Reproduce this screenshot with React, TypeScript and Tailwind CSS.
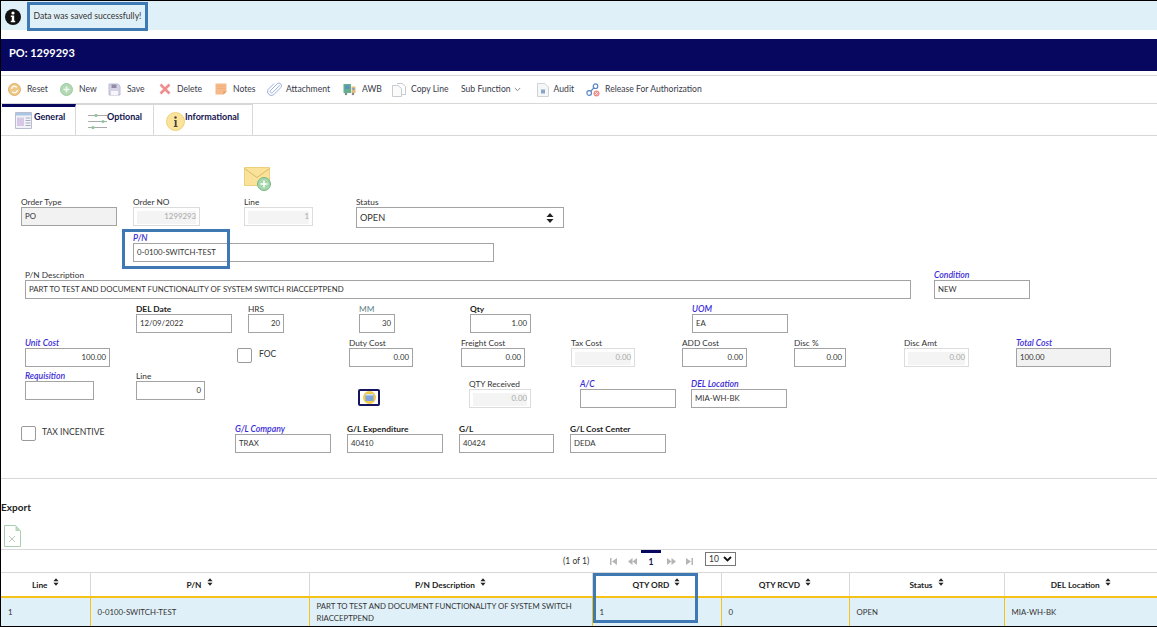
import type { ReactNode } from "react";

type FieldProps = {
    label: string;
    value?: string;
    className: string;
    tone?: "plain" | "link" | "bold" | "muted";
    state?: "normal" | "disabled" | "readonly";
    right?: boolean;
    children?: ReactNode;
};

const labelTones = {
    plain: "text-[8.3px] text-[#333]",
    link: "text-[8.7px] italic font-semibold text-[#3a2bd8]",
    bold: "text-[8.4px] font-bold text-[#222]",
    muted: "text-[8.3px] text-[#5f7f86]",
};

function Field({ label, value, className, tone = "plain", state = "normal", right, children }: FieldProps) {
    return (
        <div className={`relative shrink-0 ${className}`}>
            <div className={`h-[10px] whitespace-nowrap leading-[10px] ${labelTones[tone]}`}>{label}</div>
            <div
                className={[
                    "flex h-[19px] items-center border-[1.5px] px-[3px] pt-[1px] text-[7.8px] whitespace-nowrap",
                    right ? "justify-end" : "",
                    state === "disabled"
                        ? "border-[#dcdcdc] text-[#a8a8a8]"
                        : state === "readonly"
                          ? "border-[#a3a3a3] bg-[#f2f2f2] text-[#333]"
                          : "border-[#a3a3a3] bg-white text-[#333]",
                ].join(" ")}
            >
                {state === "disabled" ? (
                    <span className="flex h-[13px] w-full items-center justify-end bg-[#f4f4f4]">{value}</span>
                ) : (
                    value
                )}
            </div>
            {children}
        </div>
    );
}

function Check({ className }: { className: string }) {
    return <div className={`h-[15px] w-[15px] shrink-0 rounded-[2px] border border-[#9a9a9a] bg-white ${className}`} />;
}

function ResetIcon() {
    return (
        <svg width="13" height="13" viewBox="0 0 13 13">
            <circle cx="6.5" cy="6.5" r="6" fill="#efc98a" stroke="#e0b060" />
            <path d="M3.5 6a3 3 0 0 1 5.3-1.6M9.5 7a3 3 0 0 1-5.3 1.6" fill="none" stroke="#fff" strokeWidth="1.2" />
        </svg>
    );
}

function NewIcon() {
    return (
        <svg width="13" height="13" viewBox="0 0 13 13">
            <circle cx="6.5" cy="6.5" r="6" fill="#b3d8b4" stroke="#9ccb9e" />
            <path d="M6.5 3.5v6M3.5 6.5h6" stroke="#f0f8f0" strokeWidth="1.6" />
        </svg>
    );
}

function SaveIcon() {
    return (
        <svg width="13" height="13" viewBox="0 0 13 13">
            <path d="M1 1h9l2 2v9H1z" fill="#d5d2e6" stroke="#bdbad4" />
            <path d="M3.5 1.5h5v3.5h-5z" fill="#8f8ca8" />
            <path d="M3 8h7v4H3z" fill="#f6f6fb" />
        </svg>
    );
}

function DeleteIcon() {
    return (
        <svg width="12" height="12" viewBox="0 0 12 12">
            <path d="M1.5 1.5l9 9M10.5 1.5l-9 9" stroke="#ee8f8f" strokeWidth="2.6" />
        </svg>
    );
}

function NotesIcon() {
    return (
        <svg width="12" height="12" viewBox="0 0 12 12">
            <path d="M0.5 0.5h11v8l-3 3h-8z" fill="#f6b98a" />
            <path d="M2 3h8M2 5.5h8" stroke="#eea873" strokeWidth="0.6" />
            <path d="M8.5 11.5v-3h3z" fill="#e29a63" />
        </svg>
    );
}

function AttachIcon() {
    return (
        <svg width="15" height="15" viewBox="0 0 15 15">
            <path
                d="M13 3.2 5.6 10.6a1.5 1.5 0 0 1-2.1-2.1l6.6-6.6a2.6 2.6 0 0 1 3.7 3.7L6.4 13a4 4 0 0 1-5.4-5.4L7 1.6"
                fill="none"
                stroke="#92a6d4"
                strokeWidth="0.9"
            />
        </svg>
    );
}

function AwbIcon() {
    return (
        <svg width="13" height="13" viewBox="0 0 13 13">
            <path d="M0.5 1h7.5v9H0.5z" fill="#63b08f" />
            <path d="M2 2.5h4.5v3.5H2z" fill="#5a92c0" />
            <path d="M8.5 3.5h4v6.5h-4z" fill="#e4bb7c" />
            <path d="M9.5 5h2v2h-2z" fill="#7f9dc4" />
            <circle cx="3" cy="11" r="1.3" fill="#8a8a8a" />
            <circle cx="10" cy="11" r="1.3" fill="#8a8a8a" />
        </svg>
    );
}

function CopyIcon() {
    return (
        <svg width="14" height="14" viewBox="0 0 14 14">
            <path d="M5 0.5h5l3.5 3v8H10" fill="#fff" stroke="#c6ccd2" />
            <path d="M0.5 2.5h5.5l3.5 3v8h-9z" fill="#fbfbfb" stroke="#c6ccd2" />
        </svg>
    );
}

function AuditIcon() {
    return (
        <svg width="12" height="14" viewBox="0 0 12 14">
            <path d="M0.5 0.5h7.5l3.5 3.5v9.5h-11z" fill="#f5f6f8" stroke="#cfd3d8" />
            <path d="M4 6.5h4v4H4z" fill="#8aa4c4" />
        </svg>
    );
}

function ReleaseIcon() {
    return (
        <svg width="14" height="14" viewBox="0 0 14 14">
            <circle cx="3.2" cy="10" r="2.3" fill="#fff" stroke="#5c86c4" strokeWidth="1.2" />
            <circle cx="9.5" cy="3.2" r="2.3" fill="#fff" stroke="#5c86c4" strokeWidth="1.2" />
            <path d="M4.5 8.5l3.6-3.8" stroke="#5c86c4" strokeWidth="1.2" />
            <circle cx="10.5" cy="10.5" r="3" fill="#ef8d8d" />
            <path d="M9.3 9.3l2.4 2.4M11.7 9.3l-2.4 2.4" stroke="#fff" strokeWidth="0.9" />
        </svg>
    );
}

const toolbar = [
    { icon: <ResetIcon />, label: "Reset", iconBox: "ml-[7px] w-[13px]", text: "ml-[6px] w-[33px]" },
    { icon: <NewIcon />, label: "New", iconBox: "w-[13px]", text: "ml-[6px] w-[29px]" },
    { icon: <SaveIcon />, label: "Save", iconBox: "w-[13px]", text: "ml-[6px] w-[32px]" },
    { icon: <DeleteIcon />, label: "Delete", iconBox: "w-[12px]", text: "ml-[6px] w-[38px]" },
    { icon: <NotesIcon />, label: "Notes", iconBox: "w-[12px]", text: "ml-[6px] w-[34px]" },
    { icon: <AttachIcon />, label: "Attachment", iconBox: "w-[15px]", text: "ml-[4px] w-[57px]" },
    { icon: <AwbIcon />, label: "AWB", iconBox: "w-[13px]", text: "ml-[6px] w-[30px]" },
    { icon: <CopyIcon />, label: "Copy Line", iconBox: "w-[14px]", text: "ml-[5px] w-[50px]" },
];

function Sorter() {
    return (
        <svg width="6" height="8" viewBox="0 0 7 9" className="inline-block align-[2px]">
            <path d="M3.5 0 6.5 3.5h-6zM3.5 9 0.5 5.5h6z" fill="#222" />
        </svg>
    );
}

function PagerGlyph({ d }: { d: string }) {
    return (
        <svg width="9" height="9" viewBox="0 0 9 9" className="shrink-0">
            <path d={d} fill="#b5b5b5" />
        </svg>
    );
}

const columns = [
    { title: "Line", width: "w-[89px]" },
    { title: "P/N", width: "w-[219px]" },
    { title: "P/N Description", width: "w-[283px]" },
    { title: "QTY ORD", width: "w-[129px]" },
    { title: "QTY RCVD", width: "w-[128px]" },
    { title: "Status", width: "w-[155px]" },
    { title: "DEL Location", width: "w-[153px]" },
];

export default function App() {
    return (
        <div className="h-[627px] w-[1157px] overflow-hidden border-t border-b border-l border-black bg-white font-['Lato',sans-serif] text-[#333]">
            {/* message */}
            <div className="flex h-[29px] items-start bg-[#e0f0f8]">
                <svg width="16" height="16" viewBox="0 0 16 16" className="mt-[8px] ml-[4px]">
                    <circle cx="8" cy="8" r="8" fill="#111" />
                    <circle cx="8" cy="4" r="1.6" fill="#fff" />
                    <path d="M5.8 6.5h3.4v5.2h1v1.5H5.8v-1.5h1V8H5.8z" fill="#fff" />
                </svg>
                <div className="mt-[1px] ml-[6px] flex h-[29px] w-[121px] items-center justify-center border-[3px] border-[#3f79b4] text-[8.6px] whitespace-nowrap">
                    Data was saved successfully!
                </div>
            </div>

            <div className="mt-[9px] flex h-[32px] items-center bg-[#07075f] pb-[4px] pl-[8px] text-[11px] font-bold text-white">PO: 1299293</div>

            {/* toolbar */}
            <div className="mt-[4px] flex h-[29px] items-center border-y border-[#d8d8d8] text-[8.6px] text-[#3a3a4a]">
                {toolbar.map((item) => (
                    <div key={item.label} className="flex items-center">
                        <span className={`flex shrink-0 justify-center ${item.iconBox}`}>{item.icon}</span>
                        <span className={`whitespace-nowrap ${item.text}`}>{item.label}</span>
                    </div>
                ))}
                <span className="whitespace-nowrap">Sub Function</span>
                <svg width="7" height="5" viewBox="0 0 7 5" className="ml-[3px]">
                    <path d="M0.8 1l2.7 2.7L6.2 1" fill="none" stroke="#888" />
                </svg>
                <span className="ml-[16px]">
                    <AuditIcon />
                </span>
                <span className="ml-[5px]">Audit</span>
                <span className="ml-[12px]">
                    <ReleaseIcon />
                </span>
                <span className="ml-[5px] whitespace-nowrap">Release For Authorization</span>
            </div>

            {/* tabs */}
            <div className="flex h-[32px] border-b border-[#d8d8d8] pl-[1px] text-[9px] font-bold text-[#14144f]">
                <div className="flex w-[74px] items-start gap-[2px] border-t-[3px] border-r border-t-[#07075f] border-r-[#d8d8d8] pt-[5px] pl-[13px]">
                    <svg width="17" height="17" viewBox="0 0 17 17" className="shrink-0">
                        <path d="M0.5 0.5h16v16h-16z" fill="#f2f3f8" stroke="#b9bdd0" />
                        <path d="M1 1h15v2.5H1z" fill="#a9c6e4" />
                        <path d="M2 5.5h7v8.5H2z" fill="#d7c8e8" />
                        <path d="M10.5 6h5M10.5 8.5h5M10.5 11h5M10.5 13.5h5" stroke="#a8acb8" />
                    </svg>
                    <span className="mt-[-2px]">General</span>
                </div>
                <div className="flex w-[78px] items-start border-t border-r border-[#d8d8d8] pt-[7px] pl-[12px]">
                    <svg width="19" height="15" viewBox="0 0 19 15" className="mt-[2px] shrink-0">
                        <path d="M0 1.5h19M0 7.5h19M0 13.5h19" stroke="#aaa" />
                        <circle cx="8" cy="1.5" r="1.6" fill="#8fc79a" />
                        <circle cx="15" cy="7.5" r="1.6" fill="#8fc79a" />
                        <circle cx="5" cy="13.5" r="1.6" fill="#8fc79a" />
                    </svg>
                    <span className="mt-[-2px]">Optional</span>
                </div>
                <div className="flex w-[99px] items-start border-t border-r border-[#d8d8d8] pt-[7px] pl-[12px]">
                    <svg width="19" height="19" viewBox="0 0 19 19" className="shrink-0">
                        <circle cx="9.5" cy="9.5" r="9" fill="#fbe39a" stroke="#ecd27c" />
                        <circle cx="9.5" cy="5.5" r="1.2" fill="#444" />
                        <path d="M8.2 8h2.4v6h1v1H7.8v-1h1V9H8.2z" fill="#444" />
                    </svg>
                    <span className="mt-[-2px]">Informational</span>
                </div>
            </div>

            {/* form */}
            <div className="flex h-[343px] flex-col border-b border-[#d8d8d8]">
                <svg width="27" height="24" viewBox="0 0 27 24" className="mt-[31px] ml-[243px] shrink-0">
                    <path d="M0.5 0.5h25v18h-25z" fill="#fbe29a" stroke="#ecd07a" />
                    <path d="M0.5 1.5l12.5 9 12.5-9" fill="none" stroke="#d9bb66" />
                    <circle cx="20" cy="17" r="6.5" fill="#a5d6ac" stroke="#78b585" />
                    <path d="M20 13.5v7M16.5 17h7" stroke="#fff" strokeWidth="1.5" />
                </svg>

                <div className="mt-[6px] flex h-[36px] shrink-0">
                    <Field className="ml-[20px] w-[96px]" label="Order Type" value="PO" state="readonly" />
                    <Field className="ml-[16px] w-[67px]" label="Order NO" value="1299293" state="disabled" right />
                    <Field className="ml-[44px] w-[69px]" label="Line" value="1" state="disabled" right />
                    <div className="relative ml-[43px] w-[208px]">
                        <div className="h-[10px] text-[8.3px] leading-[10px]">Status</div>
                        <div className="flex h-[21px] items-center justify-between border-[1.5px] border-[#a3a3a3] px-[3px] text-[9.2px]">
                            OPEN
                            <svg width="8" height="10" viewBox="0 0 8 10" className="mr-[6px]">
                                <path d="M4 0 7.5 4h-7zM4 10 .5 6h7z" fill="#222" />
                            </svg>
                        </div>
                    </div>
                </div>

                <div className="flex h-[37px] shrink-0">
                    <Field className="ml-[132px] w-[361px]" label="P/N" value="0-0100-SWITCH-TEST" tone="link">
                        <div className="absolute top-[-4px] left-[-11px] h-[40px] w-[108px] border-[3px] border-[#3f79b4]" />
                    </Field>
                </div>

                <div className="flex h-[34px] shrink-0">
                    <Field
                        className="ml-[24px] w-[886px]"
                        label="P/N Description"
                        value="PART TO TEST AND DOCUMENT FUNCTIONALITY OF SYSTEM SWITCH RIACCEPTPEND"
                    />
                    <Field className="ml-[23px] w-[96px]" label="Condition" value="NEW" tone="link" />
                </div>

                <div className="flex h-[34px] shrink-0">
                    <Field className="ml-[135px] w-[96px]" label="DEL Date" value="12/09/2022" tone="bold" />
                    <Field className="ml-[16px] w-[36px]" label="HRS" value="20" right />
                    <Field className="ml-[75px] w-[36px]" label="MM" value="30" tone="muted" right />
                    <Field className="ml-[75px] w-[61px]" label="Qty" value="1.00" tone="bold" right />
                    <Field className="ml-[161px] w-[96px]" label="UOM" value="EA" tone="link" />
                </div>

                <div className="flex h-[33px] shrink-0">
                    <Field className="ml-[24px] w-[85px]" label="Unit Cost" value="100.00" tone="link" right />
                    <Check className="mt-[10px] ml-[127px]" />
                    <span className="mt-[10px] ml-[7px] w-[90px] text-[8.5px]">FOC</span>
                    <Field className="w-[64px]" label="Duty Cost" value="0.00" right />
                    <Field className="ml-[48px] w-[64px]" label="Freight Cost" value="0.00" right />
                    <Field className="ml-[46px] w-[64px]" label="Tax Cost" value="0.00" state="disabled" right />
                    <Field className="ml-[47px] w-[65px]" label="ADD Cost" value="0.00" right />
                    <Field className="ml-[47px] w-[52px]" label="Disc %" value="0.00" right />
                    <Field className="ml-[58px] w-[65px]" label="Disc Amt" value="0.00" state="disabled" right />
                    <Field className="ml-[47px] w-[95px]" label="Total Cost" value="100.00" tone="link" state="readonly" />
                </div>

                <div className="flex h-[53px] shrink-0">
                    <Field className="ml-[24px] w-[69px]" label="Requisition" tone="link" />
                    <Field className="ml-[42px] w-[69px]" label="Line" value="0" right />
                    <div className="mt-[18px] ml-[153px] flex h-[17px] w-[22px] shrink-0 items-center justify-center rounded-[2px] border-2 border-[#14145f]">
                        <svg width="13" height="13" viewBox="0 0 13 13">
                            <circle cx="6.5" cy="6.5" r="6.5" fill="#f2c94c" />
                            <path d="M2.5 3h8v7h-8z" fill="#7ea6dc" />
                            <path d="M2.5 3h8v1.5h-8z" fill="#cfe0f4" />
                        </svg>
                    </div>
                    <Field className="mt-[8px] ml-[89px] w-[62px]" label="QTY Received" value="0.00" state="disabled" right />
                    <Field className="mt-[8px] ml-[49px] w-[96px]" label="A/C" tone="link" />
                    <Field className="mt-[8px] ml-[15px] w-[96px]" label="DEL Location" value="MIA-WH-BK" tone="link" />
                </div>

                <div className="flex shrink-0">
                    <Check className="mt-[2px] ml-[20px]" />
                    <span className="mt-[2px] ml-[6px] w-[193px] text-[8.6px]">TAX INCENTIVE</span>
                    <Field className="w-[96px]" label="G/L Company" value="TRAX" tone="link" />
                    <Field className="ml-[16px] w-[96px]" label="G/L Expenditure" value="40410" tone="bold" />
                    <Field className="ml-[16px] w-[95px]" label="G/L" value="40424" tone="bold" />
                    <Field className="ml-[16px] w-[96px]" label="G/L Cost Center" value="DEDA" tone="bold" />
                </div>
            </div>

            {/* export */}
            <div className="flex h-[71px] flex-col border-b border-[#d8d8d8]">
                <div className="mt-[22px] text-[10px] leading-[12px] font-bold text-[#222]">Export</div>
                <svg width="17" height="22" viewBox="0 0 17 22" className="mt-[12px] ml-[3px]">
                    <path d="M0.5 0.5h11l5 5.5v15.5h-16z" fill="#fff" stroke="#a9cdb0" />
                    <path d="M11.5 0.5v5.5h5z" fill="#b9d8be" />
                    <path d="M5 11l6 6M11 11l-6 6" stroke="#b7c9bc" />
                </svg>
            </div>

            {/* paginator */}
            <div className="flex h-[23px] items-start border-b border-[#d8d8d8] pl-[562px] text-[8.5px]">
                <span className="mt-[5px] w-[46px] whitespace-nowrap">(1 of 1)</span>
                <span className="mt-[7px] flex w-[32px] gap-[10px]">
                    <PagerGlyph d="M1 1h1.5v7H1zM8 1v7L3 4.5z" />
                    <PagerGlyph d="M4.5 1v7L0 4.5zM9 1v7L4.5 4.5z" />
                </span>
                <span className="flex h-[20px] w-[20px] justify-center border-t-[3px] border-[#07075f] pt-[3px] font-bold text-[#14144f]">1</span>
                <span className="mt-[7px] ml-[6px] flex w-[29px] gap-[9px]">
                    <PagerGlyph d="M0 1v7l4.5-3.5zM4.5 1v7L9 4.5z" />
                    <PagerGlyph d="M1 1v7l5-3.5zM6.5 1H8v7H6.5z" />
                </span>
                <div className="mt-[2px] ml-[9px] flex h-[14px] w-[31px] items-center justify-between border border-[#777] px-[3px]">
                    10
                    <svg width="9" height="6" viewBox="0 0 9 6">
                        <path d="M1 1l3.5 3.5L8 1" fill="none" stroke="#111" strokeWidth="1.8" />
                    </svg>
                </div>
            </div>

            {/* table */}
            <div className="relative">
                <table className="w-[1156px] table-fixed border-collapse text-[7.8px]">
                    <thead>
                        <tr className="h-[24px]">
                            {columns.map((col) => (
                                <th key={col.title} className={`${col.width} border-r border-[#d8d8d8] text-[8.3px] font-bold text-[#222] last:border-r-0`}>
                                    {col.title} <span className="ml-[3px]"><Sorter /></span>
                                </th>
                            ))}
                        </tr>
                    </thead>
                    <tbody>
                        <tr className="h-[29px] bg-[#e0f0f8] text-left leading-[12px]">
                            <td className="border-t-2 border-r border-[#f5c21a] pl-[7px]">1</td>
                            <td className="border-t-2 border-r border-[#f5c21a] pl-[7px]">0-0100-SWITCH-TEST</td>
                            <td className="border-t-2 border-r border-[#f5c21a] pl-[7px]">
                                PART TO TEST AND DOCUMENT FUNCTIONALITY OF SYSTEM SWITCH RIACCEPTPEND
                            </td>
                            <td className="border-t-2 border-r border-[#f5c21a] pl-[7px]">1</td>
                            <td className="border-t-2 border-r border-[#f5c21a] pl-[7px]">0</td>
                            <td className="border-t-2 border-r border-[#f5c21a] pl-[7px]">OPEN</td>
                            <td className="border-t-2 border-[#f5c21a] pl-[7px]">MIA-WH-BK</td>
                        </tr>
                    </tbody>
                </table>
                <div className="absolute top-0 left-[592px] h-[50px] w-[105px] border-[3px] border-[#3f79b4]" />
            </div>
        </div>
    );
}
